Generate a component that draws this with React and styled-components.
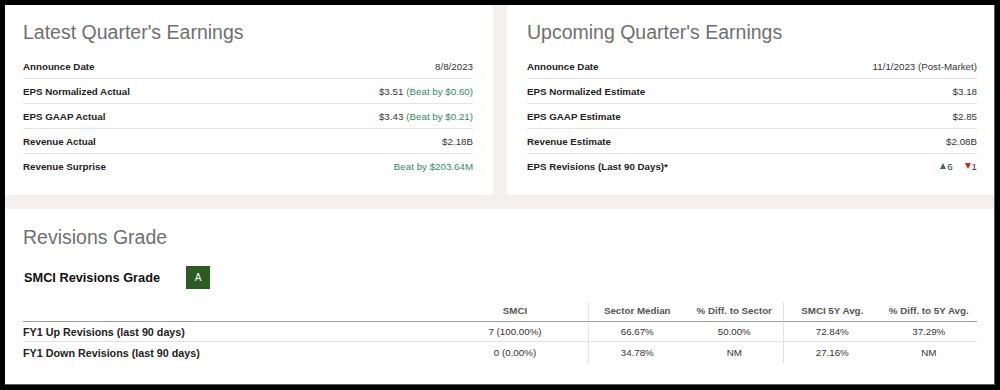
import React from 'react';
import styled, { createGlobalStyle } from 'styled-components';

const GlobalStyle = createGlobalStyle`
  html, body {
    margin: 0;
    background: #000;
  }
  #root {
    padding: 5px;
    font-family: "Liberation Sans", Arial, sans-serif;
  }
`;

const Frame = styled.div`
  box-sizing: border-box;
  width: 990px;
  height: 380px;
  background: #f3f0ee;
  border-right: 1px solid #5c5c5c;
  border-bottom: 1px solid #5c5c5c;
  display: flex;
  flex-direction: column;
  gap: 14px;
`;

const TopRow = styled.div`
  display: grid;
  grid-template-columns: 488px 1fr;
  column-gap: 14px;
  height: 190px;
`;

const Card = styled.section`
  background: #fff;
  padding: ${p => (p.$side === 'right' ? '16px 17px 17px 20px' : '16px 20px 17px 18px')};
`;

const Title = styled.h2`
  margin: 0;
  font-size: 19.5px;
  line-height: 22px;
  font-weight: 400;
  color: #707070;
`;

const Rows = styled.div`
  margin-top: 11px;
`;

const Row = styled.div`
  display: flex;
  justify-content: space-between;
  align-items: center;
  height: 24px;
  border-bottom: 1px solid #e4e4e4;
  font-size: 9.75px;

  &:last-child {
    border-bottom: none;
  }
`;

const Label = styled.span`
  font-weight: 700;
  color: #222;
`;

const Value = styled.span`
  color: #333;
  display: flex;
  align-items: center;
  gap: 3px;
`;

const Beat = styled.span`
  color: #348a66;
`;

const Trend = styled.span`
  display: inline-flex;
  align-items: center;
  gap: 1px;
  margin-left: ${p => p.$gap || 0}px;
`;

const Bottom = styled.section`
  flex: 1;
  background: #fff;
  padding: 17px 17px 0 18px;
`;

const GradeRow = styled.div`
  display: flex;
  align-items: center;
  gap: 26px;
  margin-top: 18px;
  padding-left: 1px;
`;

const GradeLabel = styled.span`
  font-size: 12.75px;
  font-weight: 700;
  color: #111;
`;

const Badge = styled.span`
  width: 24px;
  height: 23px;
  background: #2b5c22;
  color: #fff;
  font-size: 10px;
  display: flex;
  align-items: center;
  justify-content: center;
`;

const Table = styled.table`
  margin-top: 13px;
  width: 954px;
  table-layout: fixed;
  border-collapse: separate;
  border-spacing: 0;
  font-size: 9.75px;
`;

const Th = styled.th`
  height: 20px;
  padding: 0 0 3px;
  box-sizing: border-box;
  font-weight: 700;
  color: #555;
  text-align: center;
  border-bottom: 1px solid #9c9c9c;
  border-left: ${p => (p.$divided ? '1px solid #e2e2e2' : 'none')};
`;

const Td = styled.td`
  height: ${p => p.$h || 20}px;
  padding: 0;
  box-sizing: border-box;
  color: ${p => (p.$label ? '#222' : '#333')};
  text-align: ${p => (p.$label ? 'left' : 'center')};
  font-weight: ${p => (p.$label ? 700 : 400)};
  font-size: ${p => (p.$label ? '10.75px' : '9.75px')};
  border-bottom: ${p => (p.$last ? 'none' : '1px solid #e2e2e2')};
  border-left: ${p => (p.$divided ? '1px solid #e2e2e2' : 'none')};
`;

const Up = () => (
  <svg width="6" height="6" viewBox="0 0 6 6">
    <polygon points="3,0 6,6 0,6" fill="#2e7d32" />
  </svg>
);

const Down = () => (
  <svg width="6" height="6" viewBox="0 0 6 6">
    <polygon points="0,0 6,0 3,6" fill="#c62828" />
  </svg>
);

const latest = [
  ['Announce Date', '8/8/2023'],
  ['EPS Normalized Actual', '$3.51', '(Beat by $0.60)'],
  ['EPS GAAP Actual', '$3.43', '(Beat by $0.21)'],
  ['Revenue Actual', '$2.18B'],
  ['Revenue Surprise', null, 'Beat by $203.64M'],
];

const upcoming = [
  ['Announce Date', '11/1/2023 (Post-Market)'],
  ['EPS Normalized Estimate', '$3.18'],
  ['EPS GAAP Estimate', '$2.85'],
  ['Revenue Estimate', '$2.08B'],
];

const tableRows = [
  ['FY1 Up Revisions (last 90 days)', '7 (100.00%)', '66.67%', '50.00%', '72.84%', '37.29%'],
  ['FY1 Down Revisions (last 90 days)', '0 (0.00%)', '34.78%', 'NM', '27.16%', 'NM'],
];

function App() {
  return (
    <>
      <GlobalStyle />
      <Frame>
        <TopRow>
          <Card>
            <Title>Latest Quarter's Earnings</Title>
            <Rows>
              {latest.map(([label, value, beat]) => (
                <Row key={label}>
                  <Label>{label}</Label>
                  <Value>
                    {value && <span>{value}</span>}
                    {beat && <Beat>{beat}</Beat>}
                  </Value>
                </Row>
              ))}
            </Rows>
          </Card>
          <Card $side="right">
            <Title>Upcoming Quarter's Earnings</Title>
            <Rows>
              {upcoming.map(([label, value]) => (
                <Row key={label}>
                  <Label>{label}</Label>
                  <Value>{value}</Value>
                </Row>
              ))}
              <Row>
                <Label>EPS Revisions (Last 90 Days)*</Label>
                <Value>
                  <Trend><Up />6</Trend>
                  <Trend $gap={9}><Down />1</Trend>
                </Value>
              </Row>
            </Rows>
          </Card>
        </TopRow>
        <Bottom>
          <Title>Revisions Grade</Title>
          <GradeRow>
            <GradeLabel>SMCI Revisions Grade</GradeLabel>
            <Badge>A</Badge>
          </GradeRow>
          <Table>
            <colgroup>
              <col style={{ width: 419 }} />
              <col style={{ width: 146 }} />
              <col style={{ width: 97.5 }} />
              <col style={{ width: 97.5 }} />
              <col style={{ width: 97.5 }} />
              <col />
            </colgroup>
            <thead>
              <tr>
                <Th />
                <Th>SMCI</Th>
                <Th $divided>Sector Median</Th>
                <Th>% Diff. to Sector</Th>
                <Th $divided>SMCI 5Y Avg.</Th>
                <Th>% Diff. to 5Y Avg.</Th>
              </tr>
            </thead>
            <tbody>
              {tableRows.map((r, i) => {
                const last = i === tableRows.length - 1;
                const h = last ? 21 : 20;
                return (
                  <tr key={r[0]}>
                    <Td $label $last={last} $h={h}>{r[0]}</Td>
                    <Td $last={last} $h={h}>{r[1]}</Td>
                    <Td $divided $last={last} $h={h}>{r[2]}</Td>
                    <Td $last={last} $h={h}>{r[3]}</Td>
                    <Td $divided $last={last} $h={h}>{r[4]}</Td>
                    <Td $last={last} $h={h}>{r[5]}</Td>
                  </tr>
                );
              })}
            </tbody>
          </Table>
        </Bottom>
      </Frame>
    </>
  );
}

export default App;
